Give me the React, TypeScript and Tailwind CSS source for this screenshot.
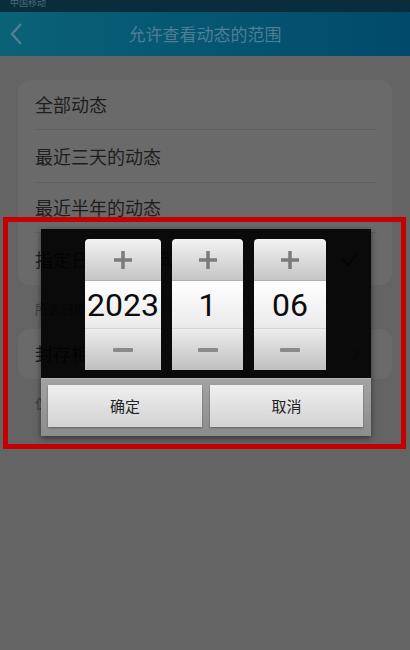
import React from "react";

const cjk = { fontFamily: '"Noto Sans CJK SC", "Noto Sans", sans-serif' };
const num = { fontFamily: 'Roboto, "Noto Sans", sans-serif' };

interface SpinnerProps {
  value: string;
  width: string;
}

const Spinner: React.FC<SpinnerProps> = ({ value, width }) => (
  <div className={`${width} flex flex-col rounded-[4px] overflow-hidden`}>
    <div className="h-[42px] flex items-center justify-center bg-gradient-to-b from-[#f2f2f2] to-[#c6c6c6] border-b border-[#b0b0b0]">
      <svg width="20" height="20" viewBox="0 0 20 20">
        <path d="M10 1v18M1 10h18" stroke="#7b7b7b" strokeWidth="3.5" />
      </svg>
    </div>
    <div
      className="h-[47px] flex items-center justify-center bg-gradient-to-b from-[#ffffff] to-[#eaeaea] text-[32px] leading-none text-[#0c0c0c]"
      style={num}
    >
      {value}
    </div>
    <div className="h-[42px] flex items-center justify-center bg-gradient-to-b from-[#ececec] to-[#c0c0c0] border-t border-[#d4d4d4]">
      <svg width="20" height="6" viewBox="0 0 20 6">
        <rect x="0" y="1" width="20" height="4" rx="1" fill="#8a8a8a" />
      </svg>
    </div>
  </div>
);

const App: React.FC = () => {
  return (
    <div className="relative w-[410px] h-[650px] overflow-hidden bg-[#646464]" style={cjk}>
      {/* status bar */}
      <div className="h-[12px] bg-[#0a2d3b] px-[10px] text-[9px] leading-[6px] text-[#4d6a76] overflow-hidden">中国移动</div>

      {/* header */}
      <div className="relative h-[44px] flex items-center justify-center bg-gradient-to-r from-[#0b6277] to-[#014a6b]">
        <svg className="absolute left-[9px] top-[10px]" width="14" height="24" viewBox="0 0 14 24">
          <path d="M12 2L3 12l9 10" stroke="#4f8093" strokeWidth="2.4" fill="none" />
        </svg>
        <span className="text-[17px] text-[#4d7f95]">允许查看动态的范围</span>
      </div>

      {/* list */}
      <div className="mx-[18px] mt-[24px] rounded-[12px] bg-[#6a6a6a] pl-[17px] pr-[16px] text-[#1e1e1e] text-[18px]">
        <div className="h-[50px] flex items-center border-b border-[#5f5f5f]">全部动态</div>
        <div className="h-[53px] flex items-center border-b border-[#5f5f5f]">最近三天的动态</div>
        <div className="h-[50px] flex items-center border-b border-[#5f5f5f]">最近半年的动态</div>
        <div className="h-[52px] flex items-center justify-between pr-[16px]">
          <span>指定日期以后的动态</span>
          <svg width="20" height="16" viewBox="0 0 20 16">
            <path d="M2 8l6 6L18 2" stroke="#2a2a2a" strokeWidth="2" fill="none" />
          </svg>
        </div>
      </div>
      <div className="px-[35px] pt-[14px] text-[13px] text-[#3c3c3c]">所选日期之前的动态</div>
      <div className="mx-[18px] mt-[10px] rounded-[12px] bg-[#6a6a6a] pl-[17px] pr-[32px] h-[50px] flex items-center justify-between text-[#1e1e1e] text-[18px]">
        <span>封存相册</span>
        <svg width="10" height="16" viewBox="0 0 10 16">
          <path d="M2 2l6 6-6 6" stroke="#4a4a4a" strokeWidth="1.6" fill="none" />
        </svg>
      </div>
      <div className="px-[35px] pt-[14px] text-[13px] text-[#3c3c3c]">仅自己可见</div>

      {/* date picker dialog */}
      <div className="absolute left-[41px] top-[229px] w-[330px] flex flex-col shadow-[0_2px_6px_rgba(0,0,0,0.5)]">
        <div className="h-[149px] bg-black/90 flex pl-[44px] pt-[10px] gap-[11px]">
          <Spinner value="2023" width="w-[76px]" />
          <Spinner value="1" width="w-[71px]" />
          <Spinner value="06" width="w-[72px]" />
        </div>
        <div className="h-[58px] bg-gradient-to-b from-[#a3a3a3] to-[#8c8c8c] border-t border-[#b4b4b4] flex items-start pt-[6px] pl-[7px] pr-[8px] gap-[8px]">
          <button className="w-[154px] h-[42px] bg-gradient-to-b from-[#efefef] to-[#d3d3d3] shadow-[0_1px_2px_rgba(0,0,0,0.35)] text-[15px] text-[#222]">
            确定
          </button>
          <button className="w-[153px] h-[42px] bg-gradient-to-b from-[#efefef] to-[#d3d3d3] shadow-[0_1px_2px_rgba(0,0,0,0.35)] text-[15px] text-[#222]">
            取消
          </button>
        </div>
      </div>

      {/* red annotation frame */}
      <div className="absolute left-[3px] top-[217px] w-[403px] h-[232px] border-[5px] border-[#c60000] pointer-events-none" />
    </div>
  );
};

export default App;
